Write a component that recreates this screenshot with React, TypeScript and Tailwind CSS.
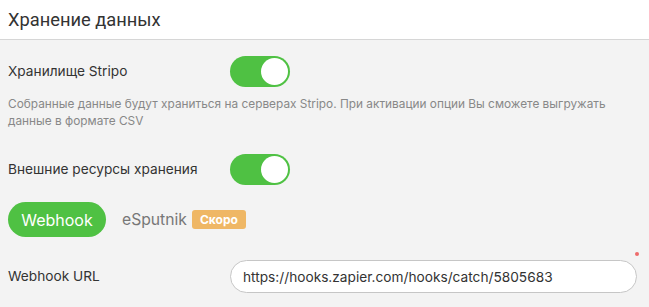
const Toggle = ({ on = true }: { on?: boolean }) => (
  <div
    className={`flex h-[31px] w-[60px] items-center rounded-full p-[2px] ${
      on ? 'justify-end bg-[#4fc143]' : 'justify-start bg-[#cccccc]'
    }`}
  >
    <div className="h-[27px] w-[27px] rounded-full bg-white" />
  </div>
);

export default function App() {
  return (
    <div className="h-[307px] w-[649px] overflow-hidden bg-[#f3f3f3] font-['Inter',sans-serif] text-[#333]">
      <div className="flex h-[40px] items-center border-b border-[#d6d6d6] bg-white px-2">
        <h1 className="font-['Roboto',sans-serif] text-[18.3px] text-[#333]">Хранение данных</h1>
      </div>

      <div className="px-2">
        <div className="mt-4 flex items-center">
          <div className="w-[222px] text-[13.7px]">Хранилище Stripo</div>
          <Toggle />
        </div>
        <p className="mt-[9px] w-[610px] text-[11.85px] leading-[17px] text-[#888]">
          Собранные данные будут храниться на серверах Stripo. При активации опции Вы сможете выгружать данные в формате CSV
        </p>

        <div className="mt-[24px] flex items-center">
          <div className="w-[222px] text-[13.7px]">Внешние ресурсы хранения</div>
          <Toggle />
        </div>

        <div className="mt-[17px] flex items-center">
          <button className="h-[35px] w-[98px] rounded-full bg-[#4fc143] text-[16px] text-white">Webhook</button>
          <span className="ml-4 text-[15.7px] text-[#777]">eSputnik</span>
          <span className="ml-[5px] flex h-[19px] w-[54px] items-center justify-center rounded-[3px] bg-[#efb765] text-[12px] font-bold text-white">
            Скоро
          </span>
        </div>

        <div className="mt-[23px] flex items-center">
          <div className="w-[222px] text-[13.7px]">Webhook URL</div>
          <div className="relative">
            <input
              readOnly
              value="https://hooks.zapier.com/hooks/catch/5805683"
              className="h-[33px] w-[407px] rounded-full border border-[#c6c6c6] bg-white px-3 text-[13.7px] text-[#333] outline-none"
            />
            <span className="absolute right-[-2px] top-[-8px] h-[4px] w-[4px] rounded-full bg-[#ee6b6b]" />
          </div>
        </div>
      </div>
    </div>
  );
}
